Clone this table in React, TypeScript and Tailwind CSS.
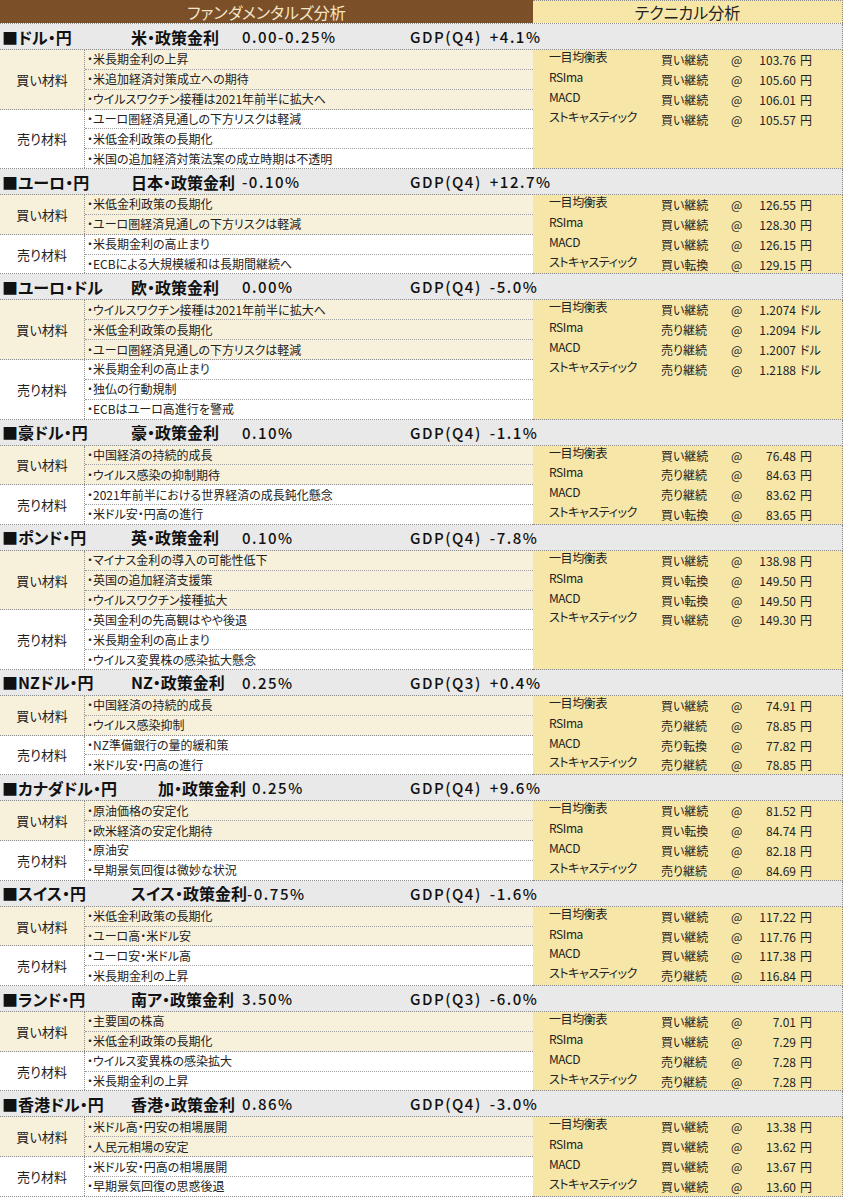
import React from 'react';

type Tech = { sig: string; price: string };

interface Pair {
  pair: string;
  rateLabel: string;
  rate: string;
  gdp: string;
  q: string;
  wideName?: boolean;
  buy: string[];
  sell: string[];
  tech: Tech[];
  unit: string;
}

const INDICATORS = ['一目均衡表', 'RSIma', 'MACD', 'ストキャスティック'];

const t = (a: string, b: string, c: string, d: string, pa: string, pb: string, pc: string, pd: string): Tech[] => [
  { sig: a, price: pa },
  { sig: b, price: pb },
  { sig: c, price: pc },
  { sig: d, price: pd },
];

const PAIRS: Pair[] = [
  {
    pair: '■ドル・円', rateLabel: '米・政策金利', rate: '0.00-0.25%', q: 'Q4', gdp: '+4.1%', unit: '円',
    buy: ['・米長期金利の上昇', '・米追加経済対策成立への期待', '・ウイルスワクチン接種は2021年前半に拡大へ'],
    sell: ['・ユーロ圏経済見通しの下方リスクは軽減', '・米低金利政策の長期化', '・米国の追加経済対策法案の成立時期は不透明'],
    tech: t('買い継続', '買い継続', '買い継続', '買い継続', '103.76', '105.60', '106.01', '105.57'),
  },
  {
    pair: '■ユーロ・円', rateLabel: '日本・政策金利', rate: '-0.10%', q: 'Q4', gdp: '+12.7%', unit: '円',
    buy: ['・米低金利政策の長期化', '・ユーロ圏経済見通しの下方リスクは軽減'],
    sell: ['・米長期金利の高止まり', '・ECBによる大規模緩和は長期間継続へ'],
    tech: t('買い継続', '買い継続', '買い継続', '買い転換', '126.55', '128.30', '126.15', '129.15'),
  },
  {
    pair: '■ユーロ・ドル', rateLabel: '欧・政策金利', rate: '0.00%', q: 'Q4', gdp: '-5.0%', unit: 'ドル',
    buy: ['・ウイルスワクチン接種は2021年前半に拡大へ', '・米低金利政策の長期化', '・ユーロ圏経済見通しの下方リスクは軽減'],
    sell: ['・米長期金利の高止まり', '・独仏の行動規制', '・ECBはユーロ高進行を警戒'],
    tech: t('買い継続', '売り継続', '売り継続', '売り継続', '1.2074', '1.2094', '1.2007', '1.2188'),
  },
  {
    pair: '■豪ドル・円', rateLabel: '豪・政策金利', rate: '0.10%', q: 'Q4', gdp: '-1.1%', unit: '円',
    buy: ['・中国経済の持続的成長', '・ウイルス感染の抑制期待'],
    sell: ['・2021年前半における世界経済の成長鈍化懸念', '・米ドル安・円高の進行'],
    tech: t('買い継続', '売り継続', '売り継続', '買い転換', '76.48', '84.63', '83.62', '83.65'),
  },
  {
    pair: '■ポンド・円', rateLabel: '英・政策金利', rate: '0.10%', q: 'Q4', gdp: '-7.8%', unit: '円',
    buy: ['・マイナス金利の導入の可能性低下', '・英国の追加経済支援策', '・ウイルスワクチン接種拡大'],
    sell: ['・英国金利の先高観はやや後退', '・米長期金利の高止まり', '・ウイルス変異株の感染拡大懸念'],
    tech: t('買い継続', '買い転換', '買い転換', '買い継続', '138.98', '149.50', '149.50', '149.30'),
  },
  {
    pair: '■NZドル・円', rateLabel: 'NZ・政策金利', rate: '0.25%', q: 'Q3', gdp: '+0.4%', unit: '円',
    buy: ['・中国経済の持続的成長', '・ウイルス感染抑制'],
    sell: ['・NZ準備銀行の量的緩和策', '・米ドル安・円高の進行'],
    tech: t('買い継続', '売り継続', '売り転換', '売り継続', '74.91', '78.85', '77.82', '78.85'),
  },
  {
    pair: '■カナダドル・円', rateLabel: '加・政策金利', rate: '0.25%', q: 'Q4', gdp: '+9.6%', unit: '円', wideName: true,
    buy: ['・原油価格の安定化', '・欧米経済の安定化期待'],
    sell: ['・原油安', '・早期景気回復は微妙な状況'],
    tech: t('買い継続', '買い転換', '買い継続', '売り継続', '81.52', '84.74', '82.18', '84.69'),
  },
  {
    pair: '■スイス・円', rateLabel: 'スイス・政策金利', rate: '-0.75%', q: 'Q4', gdp: '-1.6%', unit: '円',
    buy: ['・米低金利政策の長期化', '・ユーロ高・米ドル安'],
    sell: ['・ユーロ安・米ドル高', '・米長期金利の上昇'],
    tech: t('買い継続', '買い継続', '買い継続', '売り継続', '117.22', '117.76', '117.38', '116.84'),
  },
  {
    pair: '■ランド・円', rateLabel: '南ア・政策金利', rate: '3.50%', q: 'Q3', gdp: '-6.0%', unit: '円',
    buy: ['・主要国の株高', '・米低金利政策の長期化'],
    sell: ['・ウイルス変異株の感染拡大', '・米長期金利の上昇'],
    tech: t('買い継続', '買い継続', '売り継続', '売り継続', '7.01', '7.29', '7.28', '7.28'),
  },
  {
    pair: '■香港ドル・円', rateLabel: '香港・政策金利', rate: '0.86%', q: 'Q4', gdp: '-3.0%', unit: '円',
    buy: ['・米ドル高・円安の相場展開', '・人民元相場の安定'],
    sell: ['・米ドル安・円高の相場展開', '・早期景気回復の思惑後退'],
    tech: t('買い継続', '買い継続', '買い継続', '買い継続', '13.38', '13.62', '13.67', '13.60'),
  },
];

function Group({ label, items, buy }: { label: string; items: string[]; buy: boolean }) {
  return (
    <div className={buy ? 'flex bg-[#f7f1dc] border-b border-dotted border-[#8a8a8a]' : 'flex bg-white border-b border-dotted border-[#8a8a8a]'}>
      <div className="w-[85px] shrink-0 border-r border-dotted border-[#8a8a8a] flex items-center justify-center text-[13px] text-[#222]">
        {label}
      </div>
      <div className="flex-1">
        {items.map((it, i) => (
          <div
            key={i}
            className={
              i < items.length - 1
                ? 'h-[19.85px] border-b border-dotted border-[#a0a0a0] pl-[2px] flex items-center text-[12px] text-[#222] whitespace-nowrap'
                : 'h-[18.85px] pl-[2px] flex items-center text-[12px] text-[#222] whitespace-nowrap'
            }
          >
            {it}
          </div>
        ))}
      </div>
    </div>
  );
}

function Section({ p }: { p: Pair }) {
  return (
    <div>
      <div className="h-[26px] bg-[#e9e9e9] border-b border-r border-dotted border-[#8a8a8a] flex items-center text-[#111] whitespace-nowrap">
        <div className="w-[410px] shrink-0 flex items-center">
          <span className={p.wideName ? 'min-w-[158px] pl-[2px] font-bold text-[16px]' : 'min-w-[131px] pl-[2px] font-bold text-[16px]'}>
            {p.pair}
          </span>
          <span className={p.wideName ? 'min-w-[84px] pr-[6px] font-bold text-[16px]' : 'min-w-[111px] font-bold text-[16px]'}>{p.rateLabel}</span>
          <span className="font-medium tracking-[1.5px] text-[15px]">{p.rate}</span>
        </div>
        <span className="tracking-[1.5px] font-medium text-[15px]">GDP({p.q})</span>
        <span className="ml-[8px] tracking-[1.5px] font-medium text-[15px]">{p.gdp}</span>
      </div>
      <div className="flex">
        <div className="w-[533px] shrink-0">
          <Group label="買い材料" items={p.buy} buy />
          <Group label="売り材料" items={p.sell} buy={false} />
        </div>
        <div className="flex-1 bg-[#f6e7a8] border-r border-b border-dotted border-[#8a8a8a]">
          {p.tech.map((x, i) => (
            <div
              key={i}
              className={
                i < 3
                  ? 'h-[19.85px] grid grid-cols-[16px_112px_70px_12px_53px_auto] text-[12px] text-[#222]'
                  : 'h-[17px] grid grid-cols-[16px_112px_70px_12px_53px_auto] text-[12px] text-[#222]'
              }
            >
              <div />
              <div className="pt-[1px] whitespace-nowrap tracking-[-0.4px]">{INDICATORS[i]}</div>
              <div className="pt-[4px] whitespace-nowrap">{x.sig}</div>
              <div className="pt-[4px]">@</div>
              <div className="pt-[4px] text-right">{x.price}</div>
              <div className="pt-[4px] pl-[4px] whitespace-nowrap">{p.unit}</div>
            </div>
          ))}
        </div>
      </div>
    </div>
  );
}

export default function App() {
  return (
    <div className="w-[843px] bg-white font-['Noto_Sans_CJK_JP',sans-serif] [font-feature-settings:'palt'] leading-none">
      <div className="flex h-[24px] border-b border-dotted border-[#8a8a8a]">
        <div className="w-[533px] shrink-0 bg-[#7b4f28] text-[#f3e7c8] text-[16px] flex items-center justify-center">
          ファンダメンタルズ分析
        </div>
        <div className="flex-1 bg-[#f6e7a8] border-t border-r border-dotted border-[#8a8a8a] text-[16px] text-[#222] flex items-center justify-center">
          テクニカル分析
        </div>
      </div>
      {PAIRS.map((p, i) => (
        <Section key={i} p={p} />
      ))}
    </div>
  );
}
